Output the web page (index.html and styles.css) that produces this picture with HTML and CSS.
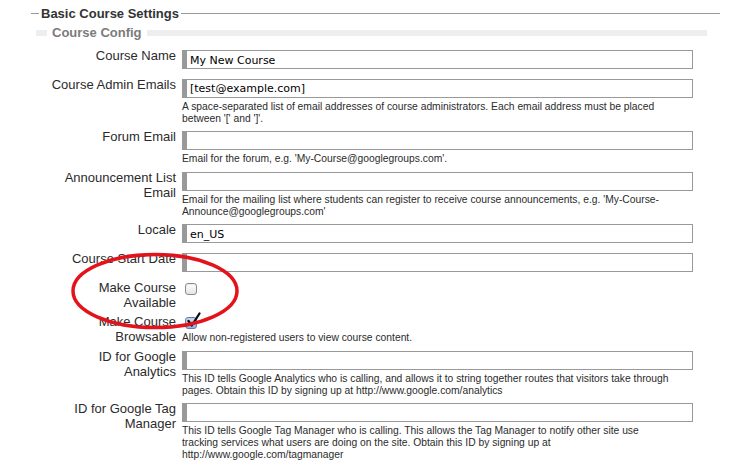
FILE: index.html
```html
<!DOCTYPE html>
<html lang="en">
<head>
<meta charset="utf-8">
<title>Basic Course Settings</title>
<link rel="stylesheet" href="styles.css">
</head>
<body>
<form class="settings">
  <fieldset class="group">
    <legend class="group-title">Basic Course Settings</legend>
    <fieldset class="section">
      <legend class="section-title">Course Config</legend>

      <div class="row">
        <label class="label" for="course-name">Course Name</label>
        <div class="control">
          <input class="text" id="course-name" type="text" value="My New Course">
        </div>
      </div>

      <div class="row">
        <label class="label" for="admin-emails">Course Admin Emails</label>
        <div class="control">
          <input class="text" id="admin-emails" type="text" value="[test@example.com]">
          <p class="help">A space-separated list of email addresses of course administrators. Each email address must be placed between '[' and ']'.</p>
        </div>
      </div>

      <div class="row">
        <label class="label" for="forum-email">Forum Email</label>
        <div class="control">
          <input class="text" id="forum-email" type="text" value="">
          <p class="help">Email for the forum, e.g. 'My-Course@googlegroups.com'.</p>
        </div>
      </div>

      <div class="row">
        <label class="label" for="announce-email">Announcement List Email</label>
        <div class="control">
          <input class="text" id="announce-email" type="text" value="">
          <p class="help">Email for the mailing list where students can register to receive course announcements, e.g. 'My-Course-Announce@googlegroups.com'</p>
        </div>
      </div>

      <div class="row">
        <label class="label" for="locale">Locale</label>
        <div class="control">
          <input class="text" id="locale" type="text" value="en_US">
        </div>
      </div>

      <div class="row">
        <label class="label" for="start-date">Course Start Date</label>
        <div class="control">
          <input class="text" id="start-date" type="text" value="">
        </div>
      </div>

      <div class="row">
        <label class="label" for="available">Make Course Available</label>
        <div class="control">
          <span class="check-wrap">
            <input class="check" id="available" type="checkbox">
          </span>
        </div>
      </div>

      <div class="row">
        <label class="label" for="browsable">Make Course Browsable</label>
        <div class="control">
          <span class="check-wrap">
            <input class="check" id="browsable" type="checkbox" checked>
            <svg class="tick" width="15" height="17" viewBox="0 0 15 17" aria-hidden="true"><path d="M2.5 9 L5.8 13.5 L13.5 1.5" fill="none" stroke="#0d0d0d" stroke-width="2.3" stroke-linecap="round" stroke-linejoin="round"/></svg>
          </span>
          <p class="help help-check">Allow non-registered users to view course content.</p>
        </div>
      </div>

      <div class="row">
        <label class="label" for="ga-id">ID for Google Analytics</label>
        <div class="control">
          <input class="text" id="ga-id" type="text" value="">
          <p class="help">This ID tells Google Analytics who is calling, and allows it to string together routes that visitors take through pages. Obtain this ID by signing up at http://www.google.com/analytics</p>
        </div>
      </div>

      <div class="row">
        <label class="label" for="gtm-id">ID for Google Tag Manager</label>
        <div class="control">
          <input class="text" id="gtm-id" type="text" value="">
          <p class="help">This ID tells Google Tag Manager who is calling. This allows the Tag Manager to notify other site use tracking services what users are doing on the site. Obtain this ID by signing up at http://www.google.com/tagmanager</p>
        </div>
      </div>
    </fieldset>
  </fieldset>
</form>

<svg class="annotation" width="746" height="475" viewBox="0 0 746 475" aria-hidden="true">
  <ellipse cx="155" cy="291" rx="82" ry="36.5" fill="none" stroke="#e3131b" stroke-width="3.5"/>
</svg>
</body>
</html>
```

FILE: styles.css
```css
html, body {
  margin: 0;
  background: #fff;
}

body {
  padding-top: 6px;
  font-family: "Liberation Sans", Arial, Helvetica, sans-serif;
  color: #333;
}

.settings {
  margin: 0;
}

.group {
  margin: 0 0 0 31px;
  width: 689px;
  box-sizing: border-box;
  min-width: 0;
  border: 0;
  border-top: 1px solid #999;
  padding: 0 13px 0 5px;
}

.group-title {
  margin-left: 3px;
  padding: 0 2px;
  font-size: 13px;
  line-height: 15px;
  font-weight: bold;
  color: #333;
}

.section {
  margin: 4px 0 0;
  min-width: 0;
  border: 0;
  border-top: 6px solid #eee;
  padding: 8px 0 0;
}

.section-title {
  margin-left: 11px;
  padding: 0 5px;
  font-size: 13px;
  line-height: 15px;
  font-weight: bold;
  color: #7b7b7b;
}

.row {
  display: flex;
  gap: 6px;
  margin-bottom: 4.6px;
  padding-left: 12px;
}

.label {
  flex: none;
  width: 128px;
  text-align: right;
  font-size: 13px;
  line-height: 15px;
  color: #2b2b2b;
}

.control {
  flex: none;
  width: 511px;
}

.text {
  display: block;
  box-sizing: border-box;
  width: 511px;
  height: 19px;
  margin: 2px 0 3px;
  border: 1px solid #999;
  border-left: 5px solid #999;
  border-radius: 0;
  padding: 1px 3px 0;
  background: #fff;
  font-family: "DejaVu Sans", Verdana, sans-serif;
  font-size: 11px;
  color: #000;
  outline: none;
}

.help {
  margin: 0;
  max-width: 492px;
  font-size: 10.3px;
  line-height: 12px;
  color: #2b2b2b;
}

.check-wrap {
  position: relative;
  display: block;
  width: 12px;
  height: 12px;
  margin: 3px 0 0 3px;
}

.check {
  appearance: none;
  -webkit-appearance: none;
  display: block;
  box-sizing: border-box;
  width: 12px;
  height: 12px;
  margin: 0;
  border: 1px solid #8c8c8c;
  border-radius: 3px;
  background: linear-gradient(#ffffff, #e4e4e4);
  box-shadow: inset 0 1px 1px rgba(0, 0, 0, 0.08);
}

.check:checked {
  border-color: #5f7fae;
  background: linear-gradient(#d3e2f6, #8fb3e4);
}

.tick {
  position: absolute;
  left: 1px;
  top: -5px;
  pointer-events: none;
}

.help-check {
  margin-top: 3px;
}

.annotation {
  position: absolute;
  left: 0;
  top: 0;
  pointer-events: none;
}
```
